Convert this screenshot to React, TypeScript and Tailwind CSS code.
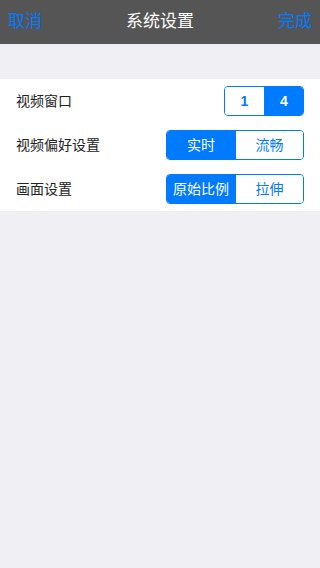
import React from 'react';

const font = { fontFamily: '"Liberation Sans", "Noto Sans CJK SC", sans-serif' };

type SegProps = { options: string[]; selected: number; segWidth: string; bold?: boolean };

function Segmented({ options, selected, segWidth, bold }: SegProps) {
    return (
        <div className="flex h-[30px] rounded-[4px] border border-[#007aff] overflow-hidden">
            {options.map((o, i) => (
                <div
                    key={o}
                    className={
                        (i === selected ? 'bg-[#007aff] text-white ' : 'bg-white text-[#007aff] ') +
                        (i > 0 ? 'border-l border-[#007aff] ' : '') +
                        (bold ? 'font-bold ' : 'font-normal ') +
                        segWidth +
                        ' flex items-center justify-center text-[14px]'
                    }
                >
                    {o}
                </div>
            ))}
        </div>
    );
}

export default function App() {
    return (
        <div className="w-[320px] h-[568px] bg-[#efeff4] flex flex-col" style={font}>
            {/* Nav bar */}
            <div className="h-[44px] bg-[#555555] flex items-center justify-between px-[8px]">
                <span className="text-[17px] text-[#007aff]">取消</span>
                <span className="text-[17px] text-white">系统设置</span>
                <span className="text-[17px] text-[#007aff]">完成</span>
            </div>

            {/* Settings group */}
            <div className="mt-[35px] bg-white flex flex-col">
                <div className="h-[44px] flex items-center justify-between pl-[16px] pr-[16px]">
                    <span className="text-[14px] text-[#222]">视频窗口</span>
                    <Segmented options={['1', '4']} selected={1} segWidth="w-[39px]" bold />
                </div>
                <div className="h-[44px] flex items-center justify-between pl-[16px] pr-[16px]">
                    <span className="text-[14px] text-[#222]">视频偏好设置</span>
                    <Segmented options={['实时', '流畅']} selected={0} segWidth="w-[68px]" />
                </div>
                <div className="h-[44px] flex items-center justify-between pl-[16px] pr-[16px]">
                    <span className="text-[14px] text-[#222]">画面设置</span>
                    <Segmented options={['原始比例', '拉伸']} selected={0} segWidth="w-[68px]" />
                </div>
            </div>
        </div>
    );
}
